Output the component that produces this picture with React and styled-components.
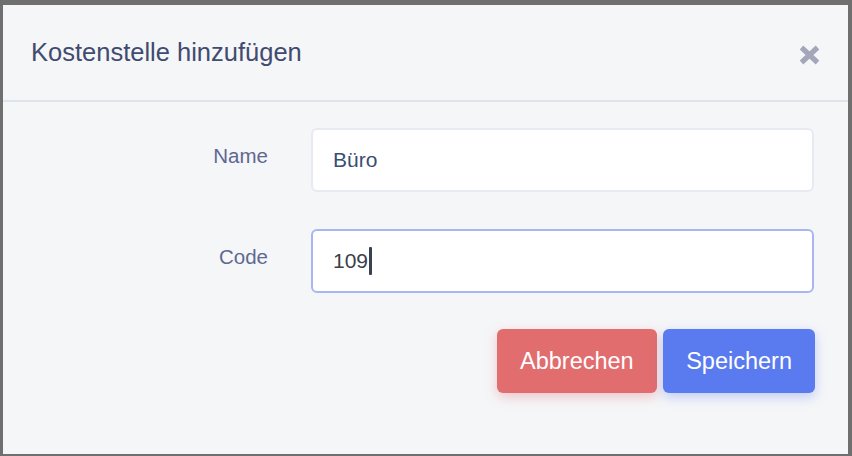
import React from "react";
import styled, { createGlobalStyle } from "styled-components";

const Global = createGlobalStyle`
  html, body { margin: 0; padding: 0; }
  body {
    background: #6f6f6f;
    font-family: "Liberation Sans", Arial, sans-serif;
  }
`;

const Frame = styled.div`
  width: 852px;
  height: 456px;
  box-sizing: border-box;
  padding: 5px 4px 2px 3px;
  background: #6f6f6f;
  display: flex;
`;

const Dialog = styled.div`
  flex: 1;
  background: #f5f6f8;
  display: flex;
  flex-direction: column;
`;

const Header = styled.div`
  height: 97px;
  box-sizing: border-box;
  border-bottom: 2px solid #dfe3ec;
  display: flex;
  align-items: center;
  justify-content: space-between;
  padding: 0 27px 0 28px;
`;

const Title = styled.h2`
  margin: 0;
  font-size: 25.5px;
  font-weight: 400;
  color: #414b6f;
`;

const Close = styled.button`
  border: 0;
  background: transparent;
  padding: 0;
  width: 23px;
  height: 22px;
  margin-top: 5px;
  display: flex;
  cursor: pointer;
`;

const Body = styled.div`
  padding: 26px 34px 0 0;
  display: flex;
  flex-direction: column;
`;

const Row = styled.div`
  display: grid;
  grid-template-columns: 265px 1fr;
  column-gap: 43px;
  margin-bottom: ${(p) => p.$mb}px;
`;

const Label = styled.label`
  text-align: right;
  font-size: 20.5px;
  line-height: 31px;
  padding-top: 12px;
  color: #5f6892;
`;

const Field = styled.div`
  height: 64px;
  box-sizing: border-box;
  background: #ffffff;
  border: ${(p) => (p.$focused ? "2px solid #a9b6f1" : "2px solid #e7eaf1")};
  border-radius: 6px;
  padding-left: 20px;
  display: flex;
  align-items: center;
  font-size: 21px;
  color: ${(p) => (p.$focused ? "#3c3f48" : "#3b4e70")};
`;

const Caret = styled.span`
  display: inline-block;
  width: 3px;
  height: 28px;
  margin-left: 1px;
  background: #3b4050;
  border-radius: 1px;
`;

const Actions = styled.div`
  display: flex;
  justify-content: flex-end;
  gap: 6px;
  margin-right: -1px;
`;

const Button = styled.button`
  height: 64px;
  padding: 0 ${(p) => p.$px}px;
  border: 0;
  border-radius: 6px;
  font-family: "Liberation Sans", Arial, sans-serif;
  font-size: 23.5px;
  color: #ffffff;
  background: ${(p) => p.$bg};
  box-shadow: 0 4px 12px ${(p) => p.$shadow};
  cursor: pointer;
`;

export default function App() {
  return (
    <>
      <Global />
      <Frame>
        <Dialog>
          <Header>
            <Title>Kostenstelle hinzufügen</Title>
            <Close aria-label="close">
              <svg width="23" height="22" viewBox="0 0 23 22">
                <path
                  d="M3.5 3.5 L19.5 18.5 M19.5 3.5 L3.5 18.5"
                  stroke="#a3a7b9"
                  strokeWidth="5.2"
                  strokeLinecap="butt"
                  fill="none"
                />
              </svg>
            </Close>
          </Header>
          <Body>
            <Row $mb={37}>
              <Label>Name</Label>
              <Field>Büro</Field>
            </Row>
            <Row $mb={36}>
              <Label>Code</Label>
              <Field $focused>
                109
                <Caret />
              </Field>
            </Row>
            <Actions>
              <Button $bg="#e16d6f" $shadow="rgba(225,109,111,0.35)" $px={23.5}>
                Abbrechen
              </Button>
              <Button $bg="#5a7af0" $shadow="rgba(90,122,240,0.35)" $px={23}>
                Speichern
              </Button>
            </Actions>
          </Body>
        </Dialog>
      </Frame>
    </>
  );
}
